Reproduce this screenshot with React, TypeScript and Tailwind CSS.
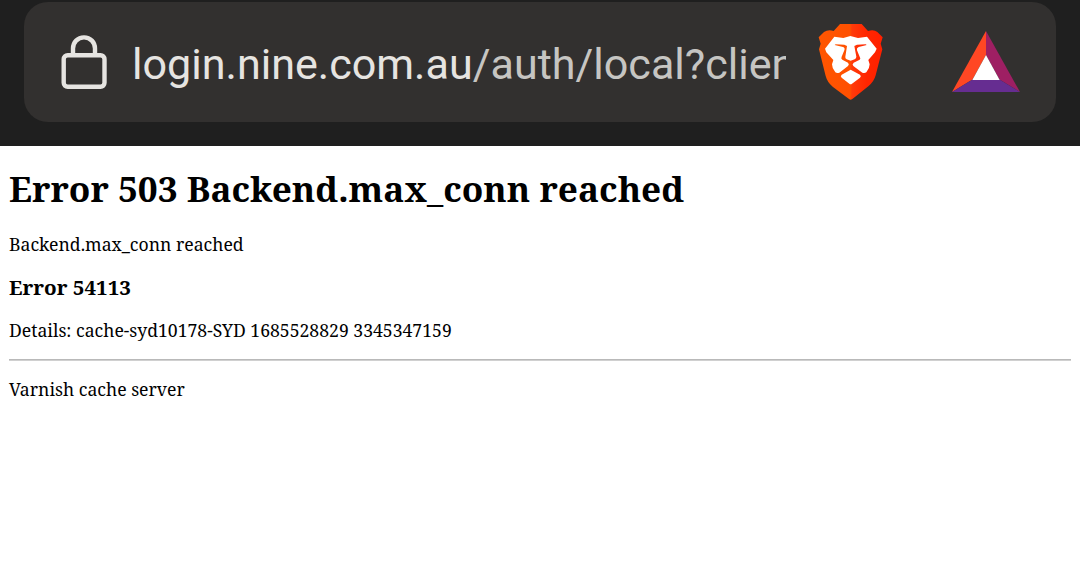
const LockIcon = () => (
  <svg width="46" height="55" viewBox="0 0 46 55" fill="none" stroke="#e6e4e1" strokeWidth="4.4" className="shrink-0">
    <rect x="2.7" y="20.2" width="40.8" height="31.6" rx="4" />
    <path d="M12 20V13.6C12 7.2 16.6 2.4 23 2.4S34 7.2 34 13.6V20" />
  </svg>
);

const BraveIcon = () => (
  <svg width="65" height="78" viewBox="54 39 195 234" className="shrink-0">
    <defs>
      <linearGradient id="shield" x1="0" x2="1" y1="0" y2="0">
        <stop offset="0" stopColor="#ff5601" />
        <stop offset="0.49" stopColor="#ff5000" />
        <stop offset="0.52" stopColor="#ff3a0a" />
        <stop offset="0.75" stopColor="#ff2600" />
        <stop offset="1" stopColor="#ff2000" />
      </linearGradient>
    </defs>
    <path
      fill="url(#shield)"
      d="M120 42H185L204 63Q222 58 232 66L248 82L242 101L247 118L227 196Q222 215 205 229L160 265Q152 273 144 265L98 230Q82 217 77 198L57 118L62 101L56 82L72 66Q84 58 101 63Z"
    />
    <path
      fill="#fff"
      d="M103 80L130 84L151 78L174 84L201 80L230 116L225 127L205 150L209 163Q209 176 199 187Q194 191 187 188L160 168Q155 163 161 158L179 149Q183 146 179 140L171 121Q169 114 176 111L200 105L197 103L171 104L163 108L169 140Q169 145 164 148L152 152L140 148Q135 145 136 140L141 108L133 104L107 103L104 105L129 111Q136 114 133 121L125 140Q122 146 127 149L144 158Q149 163 144 168L118 188Q111 191 106 187Q96 176 96 163L100 150L79 127L75 116Z"
    />
    <path fill="#fff" d="M152 179L180 194Q185 198 180 203L156 221Q152 224 148 221L125 203Q120 198 125 194Z" />
  </svg>
);

const RewardsIcon = () => (
  <svg width="68" height="61" viewBox="0 0 68 61" className="mb-0.5 shrink-0">
    <path fill="#ff4724" d="M34 0V24L20.5 48.5L0 61Z" />
    <path fill="#9e1f63" d="M34 0L68 61L47.5 48.5L34 24Z" />
    <path fill="#662d91" d="M0 61L20.5 48.5H47.5L68 61Z" />
    <path fill="#fff" d="M34 24L47.7 49H20.3Z" />
  </svg>
);

const AddressBar = () => (
  <header className="h-[146px] bg-[#1f1f1f] px-6 pt-0.5">
    <div className="flex h-[120px] items-center rounded-[24px] bg-[#32302f] pr-9 pl-[37px]">
      <LockIcon />
      <div className="ml-[25px] w-[654px] overflow-hidden pt-[5px] font-['Roboto',sans-serif] text-[43.1px] leading-[60px] whitespace-nowrap text-[#c6c5c2]">
        <span className="text-[#e6e4e1]">login.nine.com.au</span>/auth/local?client
      </div>
      <div className="ml-8 flex items-center gap-[69px]">
        <BraveIcon />
        <RewardsIcon />
      </div>
    </div>
  </header>
);

const ErrorPage = () => (
  <main className="px-[9px] pt-[18px] font-['Noto_Serif',serif] text-[17.63px] leading-6 text-black">
    <h1 className="text-[35.2px] leading-[49px] font-bold">Error 503 Backend.max_conn reached</h1>
    <p className="mt-[19px]">Backend.max_conn reached</p>
    <h3 className="mt-[17px] text-[20.6px] leading-7 font-bold">Error 54113</h3>
    <p className="mt-[17px]">Details: cache-syd10178-SYD 1685528829 3345347159</p>
    <hr className="mt-[17px] border-t border-b border-t-[#b9b9b9] border-b-[#d0d0d0]" />
    <p className="mt-4">Varnish cache server</p>
  </main>
);

const App = () => (
  <div className="min-h-screen bg-white">
    <AddressBar />
    <ErrorPage />
  </div>
);

export default App;
